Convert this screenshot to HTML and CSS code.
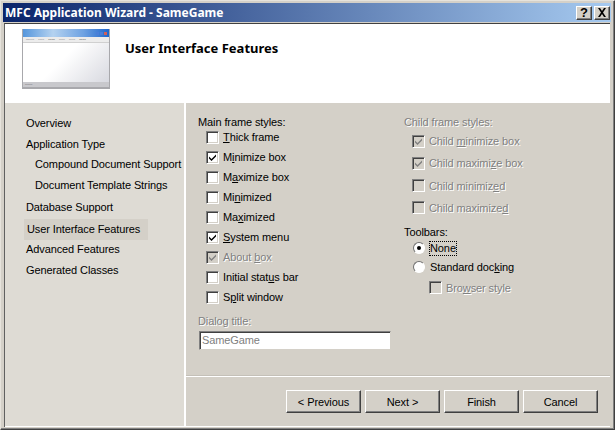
FILE: index.html
```html
<!DOCTYPE html>
<html lang="en">
<head>
    <meta charset="UTF-8">
    <title>MFC Application Wizard - SameGame</title>
    <link rel="stylesheet" href="styles.css">
</head>
<body>
    <div class="window">
        <div class="titlebar">
            <span class="title-text">MFC Application Wizard - SameGame</span>
            <span class="cap-btn cap-help">?</span>
            <span class="cap-btn cap-close">
                <svg width="10" height="9" viewBox="0 0 10 9"><path d="M1 0h2l2 3 2-3h2L6 4.500 9 9H7L5 6 3 9H1l3-4.500z" fill="#000"/></svg>
            </span>
        </div>
        <div class="banner">
            <div class="thumb">
                <div class="thumb-title"><i></i><i></i><i class="red"></i></div>
                <div class="thumb-menu"><span>MFFFF</span><span>FFFF</span><span>EEEE</span><span>FFFF</span><span>FFFF</span><span>EEEE</span></div>
                <div class="thumb-body"></div>
                <div class="thumb-status"><span>FFFFF</span></div>
            </div>
            <h1>User Interface Features</h1>
        </div>
        <div class="main">
            <div class="nav">
                <div class="nav-item">Overview</div>
                <div class="nav-item">Application Type</div>
                <div class="nav-item sub">Compound Document Support</div>
                <div class="nav-item sub">Document Template Strings</div>
                <div class="nav-item db">Database Support</div>
                <div class="nav-item current">User Interface Features</div>
                <div class="nav-item">Advanced Features</div>
                <div class="nav-item">Generated Classes</div>
            </div>
            <div class="content">
                <div class="options">
                    <div class="col-left">
                        <div class="group-label">Main frame styles:</div>
                        <div class="opt"><span class="box"></span><span><u>T</u>hick frame</span></div>
                        <div class="opt"><span class="box"><svg width="9" height="9" viewBox="0 0 9 9"><path d="M1 3.500l2.500 2.500L8 1.500v2L3.500 8 1 5.500z" fill="#000"/></svg></span><span>M<u>i</u>nimize box</span></div>
                        <div class="opt"><span class="box"></span><span>M<u>a</u>ximize box</span></div>
                        <div class="opt"><span class="box"></span><span>Mi<u>n</u>imized</span></div>
                        <div class="opt"><span class="box"></span><span>Ma<u>x</u>imized</span></div>
                        <div class="opt"><span class="box"><svg width="9" height="9" viewBox="0 0 9 9"><path d="M1 3.500l2.500 2.500L8 1.500v2L3.500 8 1 5.500z" fill="#000"/></svg></span><span><u>S</u>ystem menu</span></div>
                        <div class="opt off"><span class="box"><svg width="9" height="9" viewBox="0 0 9 9"><path d="M1 3.500l2.500 2.500L8 1.500v2L3.500 8 1 5.500z" fill="#808080"/></svg></span><span>About <u>b</u>ox</span></div>
                        <div class="opt"><span class="box"></span><span>Initial stat<u>u</u>s bar</span></div>
                        <div class="opt"><span class="box"></span><span>S<u>p</u>lit window</span></div>
                        <div class="group-label off dialog-label">Dialo<u>g</u> title:</div>
                        <div class="field">SameGame</div>
                    </div>
                    <div class="col-right">
                        <div class="group-label off">Child frame styles:</div>
                        <div class="opt tall off"><span class="box"><svg width="9" height="9" viewBox="0 0 9 9"><path d="M1 3.500l2.500 2.500L8 1.500v2L3.500 8 1 5.500z" fill="#808080"/></svg></span><span>Child <u>m</u>inimize box</span></div>
                        <div class="opt tall off"><span class="box"><svg width="9" height="9" viewBox="0 0 9 9"><path d="M1 3.500l2.500 2.500L8 1.500v2L3.500 8 1 5.500z" fill="#808080"/></svg></span><span>Child maximi<u>z</u>e box</span></div>
                        <div class="opt tall off"><span class="box"></span><span>Child minimiz<u>e</u>d</span></div>
                        <div class="opt tall off"><span class="box"></span><span>Child maximize<u>d</u></span></div>
                        <div class="group-label toolbars-label">Toolbars:</div>
                        <div class="opt radio-row"><span class="radio checked"></span><span class="focused">None</span></div>
                        <div class="opt radio-row"><span class="radio"></span><span>Standard doc<u>k</u>ing</span></div>
                        <div class="opt browser off"><span class="box"></span><span>Bro<u>w</u>ser style</span></div>
                    </div>
                </div>
                <div class="buttons">
                    <button class="btn prev">&lt; Previous</button>
                    <button class="btn">Next &gt;</button>
                    <button class="btn">Finish</button>
                    <button class="btn">Cancel</button>
                </div>
            </div>
        </div>
    </div>
</body>
</html>
```

FILE: styles.css
```css
* {
    box-sizing: border-box;
}

body {
    margin: 0;
    width: 615px;
    height: 430px;
    overflow: hidden;
    font-family: "Liberation Sans", sans-serif;
    font-size: 11px;
    letter-spacing: -0.1px;
    white-space: nowrap;
    color: #000;
    background-color: #d4d0c8;
}

.window {
    width: 615px;
    height: 430px;
    display: flex;
    flex-direction: column;
    padding: 2px 1px 2px;
    border-top: 1px solid #e6e3dc;
    border-left: 1px solid #e6e3dc;
    border-right: 1px solid #404040;
    border-bottom: 1px solid #404040;
    box-shadow: inset -1px -1px 0 #808080;
}

.titlebar {
    height: 19px;
    flex: none;
    margin: 0 2px 0 1px;
    display: flex;
    align-items: center;
    padding: 0 1px 0 2px;
    gap: 2px;
    background: linear-gradient(to right, #0a246a, #a6caf0);
}

.title-text {
    flex: 1;
    color: #fff;
    font-family: "Noto Sans", sans-serif;
    font-weight: bold;
    font-size: 12px;
    letter-spacing: 0;
}

.cap-btn {
    width: 16px;
    height: 14px;
    display: flex;
    align-items: center;
    justify-content: center;
    background-color: #d4d0c8;
    border: 1px solid;
    border-color: #fff #404040 #404040 #fff;
    box-shadow: inset -1px -1px 0 #808080;
    font-weight: bold;
    font-size: 13px;
    line-height: 1;
}

.banner {
    height: 80px;
    flex: none;
    margin: 1px 3px 0 2px;
    display: flex;
    align-items: flex-start;
    padding: 5px 0 0 17px;
    gap: 15px;
    background-color: #fff;
    border-top: 1px solid #404040;
    border-left: 1px solid #606060;
}

h1 {
    margin: 12px 0 0;
    font-family: "Noto Sans", sans-serif;
    font-size: 13px;
    font-weight: bold;
    letter-spacing: 0;
    line-height: 15px;
}

.thumb {
    width: 88px;
    height: 60px;
    display: flex;
    flex-direction: column;
    border: 1px solid #a8a8ac;
    border-top: 0;
    border-bottom-width: 2px;
    background-color: #fff;
}

.thumb-title {
    height: 8px;
    display: flex;
    justify-content: flex-end;
    align-items: center;
    gap: 1px;
    padding-right: 2px;
    background: linear-gradient(to right, #5596dc, #b4d2f0 35%, #6ea2e2 70%, #1f66cc);
}

.thumb-title i {
    width: 3px;
    height: 3px;
    background-color: #4a7fd8;
}

.thumb-title i.red {
    background-color: #d0605a;
}

.thumb-menu {
    height: 5px;
    display: flex;
    gap: 4px;
    padding-left: 3px;
    background-color: #ececec;
    font-size: 2.500px;
    line-height: 5px;
    letter-spacing: 0;
    color: #777;
}

.thumb-body {
    flex: 1;
    background: linear-gradient(135deg, #fff 45%, #d8d9e0);
    border-top: 1px solid #d0d0d0;
}

.thumb-status {
    height: 5px;
    padding-left: 2px;
    background-color: #c8c8cc;
    font-size: 2.500px;
    line-height: 5px;
    letter-spacing: 0;
    color: #666;
}

.main {
    flex: 1;
    margin: 0 3px 0 2px;
    display: flex;
    gap: 2px;
    min-height: 0;
    padding-bottom: 1px;
    background-color: #fff;
    border-left: 1px solid #606060;
}

.nav {
    width: 179px;
    flex: none;
    background-color: #dedbd4;
    padding: 13px 0 0 21px;
}

.nav-item {
    height: 20px;
    line-height: 15px;
    margin-bottom: 0.5px;
}

.nav-item.sub {
    padding-left: 9px;
}

.nav-item.db {
    margin-top: 2px;
}

.nav-item.current {
    width: 124px;
    height: 21px;
    margin-left: -2px;
    padding: 3px 0 0 3px;
    margin-top: -1.5px;
    margin-bottom: 2.5px;
    background-color: #d4d0c8;
}

.content {
    flex: 1;
    display: flex;
    flex-direction: column;
    background-color: #d4d0c8;
}

.options {
    height: 274px;
    flex: none;
    display: flex;
    padding: 12px 0 0 12px;
    border-bottom: 1px solid #fff;
    box-shadow: 0 -1px 0 #c4c0b8 inset;
}

.col-left {
    width: 206px;
    flex: none;
}

.col-right {
    flex: 1;
}

.group-label {
    height: 14px;
    line-height: 14px;
}

.off {
    color: #808080;
    text-shadow: 1px 1px 0 #fff;
}

.opt {
    height: 20px;
    display: flex;
    align-items: center;
    gap: 4px;
    padding-left: 8px;
}

.group-label + .opt {
    margin-top: -2px;
}

.col-right .opt.tall {
    height: 22px;
}

.col-right .group-label + .opt.tall {
    margin-top: 1px;
}

.col-right .opt.tall + .opt.tall {
    margin-top: 0.3px;
}

.toolbars-label {
    margin-top: 6px;
}

.radio-row {
    height: 19px;
    gap: 5px;
    padding-left: 9px;
}

.col-right .group-label + .radio-row {
    margin-top: 0;
}

.browser {
    padding-left: 25px;
    margin-top: 1px;
}

.box {
    width: 13px;
    height: 13px;
    flex: none;
    display: flex;
    align-items: center;
    justify-content: center;
    background-color: #fff;
    border: 1px solid;
    border-color: #808080 #fff #fff #808080;
    box-shadow: inset 1px 1px 0 #404040, inset -1px -1px 0 #d4d0c8;
}

.off .box {
    background-color: #d4d0c8;
}

.radio {
    width: 12px;
    height: 12px;
    flex: none;
    border-radius: 50%;
    background-color: #fff;
    border: 1px solid;
    border-color: #707070 #fff #fff #707070;
    display: flex;
    align-items: center;
    justify-content: center;
}

.radio.checked::after {
    content: "";
    width: 4px;
    height: 4px;
    border-radius: 50%;
    background-color: #000;
}

.focused {
    outline: 1px dotted #000;
    line-height: 13px;
}

.dialog-label {
    margin-top: 7px;
}

.field {
    width: 192px;
    height: 19px;
    margin: 3px 0 0 1px;
    line-height: 16px;
    padding-left: 2px;
    color: #808080;
    background-color: #fff;
    border: 1px solid;
    border-color: #808080 #d4d0c8 #d4d0c8 #808080;
    box-shadow: inset 1px 1px 0 #404040;
}

.buttons {
    display: flex;
    justify-content: flex-end;
    gap: 4px;
    padding: 13px 12px 0 0;
}

.btn {
    width: 75px;
    height: 23px;
    padding: 0;
    font-family: inherit;
    font-size: inherit;
    letter-spacing: inherit;
    color: #000;
    background-color: #d4d0c8;
    border: 1px solid;
    border-color: #fff #404040 #404040 #fff;
    box-shadow: inset -1px -1px 0 #808080;
}
```
